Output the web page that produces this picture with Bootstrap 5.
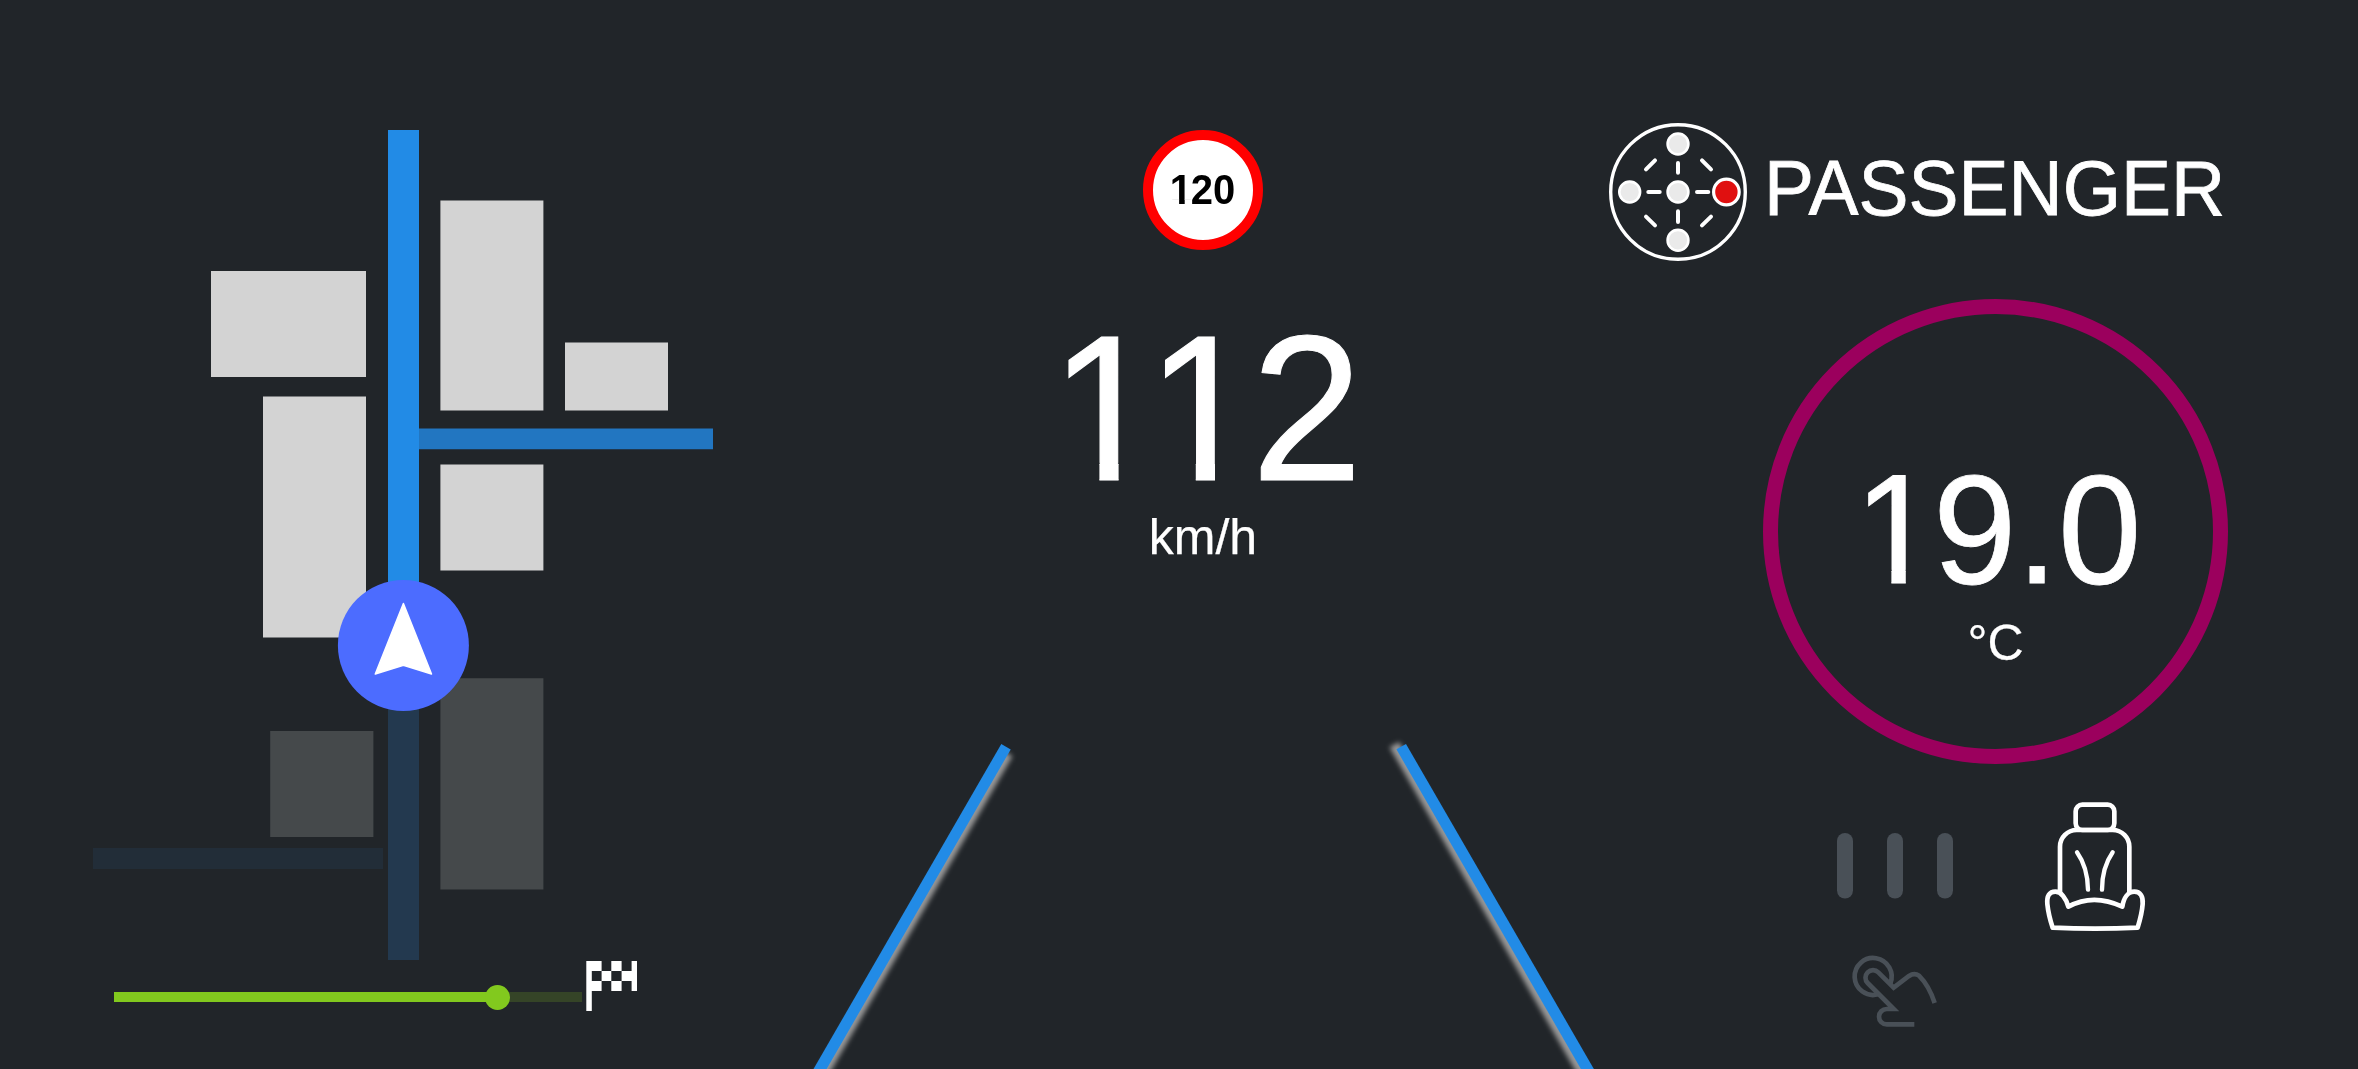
<!DOCTYPE html>
<html lang="en">
<head>
<meta charset="utf-8">
<meta name="viewport" content="width=device-width, initial-scale=1">
<title>Dashboard</title>
<link href="https://cdn.jsdelivr.net/npm/bootstrap@5.3.0/dist/css/bootstrap.min.css" rel="stylesheet">
<style>
  body { background: #212529; color: #fff; font-family: "Liberation Sans", Arial, sans-serif; }
  svg { display: block; }
  .dash { height: 1069px; width: 2358px; }
  .nav-pane { width: 810px; padding-top: 130px; }
  .speed-pane { width: 786px; padding-top: 130px; }
  .climate-pane { width: 762px; padding-top: 122px; }
  .city-map { margin-left: 93px; }
  .trip { margin: 1px 0 0 114px; height: 50px; gap: 4px; }
  .trip-track { width: 468px; height: 10px; margin-top: 31px; background: #354427; border-radius: 0; overflow: visible; }
  .trip-track .progress-bar { background: #82c91e; overflow: visible; }
  .trip-dot { width: 25px; height: 25px; background: #82c91e; right: -12.5px; top: -7.5px; }
  .limit-sign { width: 120px; height: 120px; border: 10px solid #f00; font-size: 40px; padding-right: 2px; }
  /* tall figures, stretched upwards from the baseline */
  .figures { display: flex; line-height: 1; white-space: nowrap; transform: scaleY(1.04); transform-origin: 0 .8465em; }
  /* figure one without its foot serif */
  .one { width: .556em; text-indent: .031em; clip-path: polygon(0 0, 1em 0, 1em .762em, .375em .762em, .375em 1em, .279em 1em, .279em .762em, 0 .762em); }
  .one-bold { width: .556em; text-indent: .03em; clip-path: polygon(0 0, 1em 0, 1em .735em, .402em .735em, .402em 1em, .262em 1em, .262em .735em, 0 .735em); }
  .one-tight { margin-right: -.074em; }
  .speed-num { font-size: 200px; margin-top: 61px; }
  .speed-num, .temp-num, .unit-text { -webkit-text-stroke: .005em #fff; }
  .unit-text { font-size: 50px; line-height: 58px; }
  .speed-unit { margin-top: -3px; }
  .temp-unit { margin-top: 8px; }
  .lane-view { margin-top: auto; }
  .seat-name { font-size: 75px; line-height: 86px; margin: 0 0 6px 16px; transform: scaleY(1.04); transform-origin: 0 69px; -webkit-text-stroke: .01em #fff; }
  .seat-head { padding-left: 12px; height: 140px; }
  .temp-ring { width: 465px; height: 465px; border: 15px solid #9b005d; margin: 37px 0 0 167px; padding-top: 142px; }
  .temp-num { font-size: 150px; }
  .controls { margin: 34px 0 0 238px; }
</style>
</head>
<body>
<main class="dash d-flex overflow-hidden">
  <section class="nav-pane flex-shrink-0">
    <svg class="city-map" width="622" height="830" viewBox="93 130 622 830">
      <path fill="#d3d3d3" d="M211 271H366V377H211zM263 396.4H366V637.4H263zM440.4 200.4H543.4V410.4H440.4zM565 342.4H668V410.4H565zM440.4 464.4H543.4V570.4H440.4z"/>
      <path fill="#45494b" d="M270.2 731H373.4V837H270.2zM440.4 678.3H543.4V889.4H440.4z"/>
      <path fill="#2276c1" d="M419 428.5H713V449.3H419z"/>
      <path fill="#222d38" d="M93 848H383V869H93z"/>
      <path fill="#228be6" d="M388 130H419V645H388z"/>
      <path fill="#23394f" d="M388 645H419V960H388z"/>
      <circle cx="403.4" cy="645.4" r="65.5" fill="#4c6cff"/>
      <path d="M403.4 603.5L431.5 674L403.4 665.3L375.3 674Z" fill="#fff" stroke="#fff" stroke-width="1.5" stroke-linejoin="round"/>
    </svg>
    <div class="trip d-flex align-items-start">
      <div class="trip-track progress">
        <div class="progress-bar position-relative" style="width:82%"><span class="trip-dot rounded-circle position-absolute"></span></div>
      </div>
      <svg width="51" height="50" viewBox="586 961 51 50" fill="#fff">
        <path d="M586.3 961H601.6V971H591.8V981H601.6V991H591.8V1011H586.3zM611.3 961H621.6V971H611.3zM601.6 971H611.3V981H601.6zM611.3 981H621.6V991H611.3zM621.6 971H631.6V961H637V991H631.6V981H621.6z"/>
      </svg>
    </div>
  </section>

  <section class="speed-pane d-flex flex-column align-items-center flex-shrink-0">
    <div class="limit-sign bg-white text-black fw-bold rounded-circle d-flex align-items-center justify-content-center flex-shrink-0"><div class="figures"><span class="one-bold">1</span><span>20</span></div></div>
    <div class="speed-num figures"><span class="one one-tight">1</span><span class="one">1</span><span>2</span></div>
    <div class="unit-text speed-unit">km/h</div>
    <svg class="lane-view" width="786" height="340" viewBox="810 729 786 340">
      <defs><filter id="soft" x="-10%" y="-10%" width="120%" height="120%"><feGaussianBlur stdDeviation="2.5"/></filter></defs>
      <g fill="#979797" filter="url(#soft)">
        <path d="M1003.1 750.8L1012.5 756.2L805.4 1115H792z"/>
        <path d="M1389.5 747.2L1399.2 742L1614.5 1115H1601z"/>
      </g>
      <g fill="#228be6">
        <path d="M1001.3 744L1010.7 749.4L803.6 1109H790.4z"/>
        <path d="M1396.4 749.3L1406 744L1617 1109H1604z"/>
      </g>
    </svg>
  </section>

  <section class="climate-pane flex-shrink-0">
    <div class="seat-head d-flex align-items-center">
      <svg width="140" height="140" viewBox="1608 122 140 140" fill="none" stroke="#fff">
        <circle cx="1678" cy="192" r="67.3" stroke-width="3.4"/>
        <g fill="#eaeaea" stroke-width="2.6">
          <circle cx="1678" cy="144" r="10.4"/><circle cx="1678" cy="192" r="10.4"/><circle cx="1678" cy="240.3" r="10.4"/><circle cx="1629.7" cy="192" r="10.4"/>
        </g>
        <circle cx="1726.4" cy="192" r="12.8" fill="#e01010" stroke-width="3.2"/>
        <path stroke-width="4" stroke-linecap="round" d="M1678 163V172.8M1678 211.3V222M1648.3 192H1659.7M1697 192H1708.3M1646 169.4L1655 160.4M1702 160.4L1711 169.4M1646 216.6L1655 225.4M1711 216.6L1702 225.4"/>
      </svg>
      <div class="seat-name">PASSENGER</div>
    </div>
    <div class="temp-ring rounded-circle d-flex flex-column align-items-center">
      <div class="temp-num figures"><span class="one">1</span><span>9.0</span></div>
      <div class="unit-text temp-unit">°C</div>
    </div>
    <div class="controls d-flex">
      <div>
        <svg width="140" height="110" viewBox="1834 798 140 110" fill="#495057">
          <rect x="1837" y="833" width="16" height="65.5" rx="8"/><rect x="1887" y="833" width="16" height="65.5" rx="8"/><rect x="1937" y="833" width="16" height="65.5" rx="8"/>
        </svg>
        <svg width="140" height="130" viewBox="102 384 420 390" fill="none" stroke="#495057" stroke-width="14">
          <path d="M271 610A55.500 55.500 0 1 0 234 643"/>
          <path d="M404 669Q387 617 357 587Q343 577 327 588L281 623L235 577A22.600 22.600 0 0 0 203 609L281 687H260A22.500 22.500 0 0 0 260 733H343"/>
        </svg>
      </div>
      <svg class="ms-5" width="130" height="150" viewBox="666 54 390 450" fill="none" stroke="#fff" stroke-width="14" stroke-linecap="round" stroke-linejoin="round">
        <rect x="827" y="74" width="116" height="76" rx="20"/>
        <path d="M780 335V200A50 50 0 0 1 830 150H938A50 50 0 0 1 988 200V335"/>
        <path d="M805 380C798 354 783 335 766 335C748 335 740 348 742 372C745 402 751 422 758 443Q885 449 1013 443C1020 420 1026 400 1028 372C1030 350 1021 335 1003 335C984 335 971 354 967 380Q880 339 805 380Z"/>
        <path stroke-width="13" d="M831 217Q863 262 864 329M938 217Q906 263 906 329"/>
      </svg>
    </div>
  </section>
</main>
<script src="https://cdn.jsdelivr.net/npm/bootstrap@5.3.0/dist/js/bootstrap.bundle.min.js"></script>
</body>
</html>
